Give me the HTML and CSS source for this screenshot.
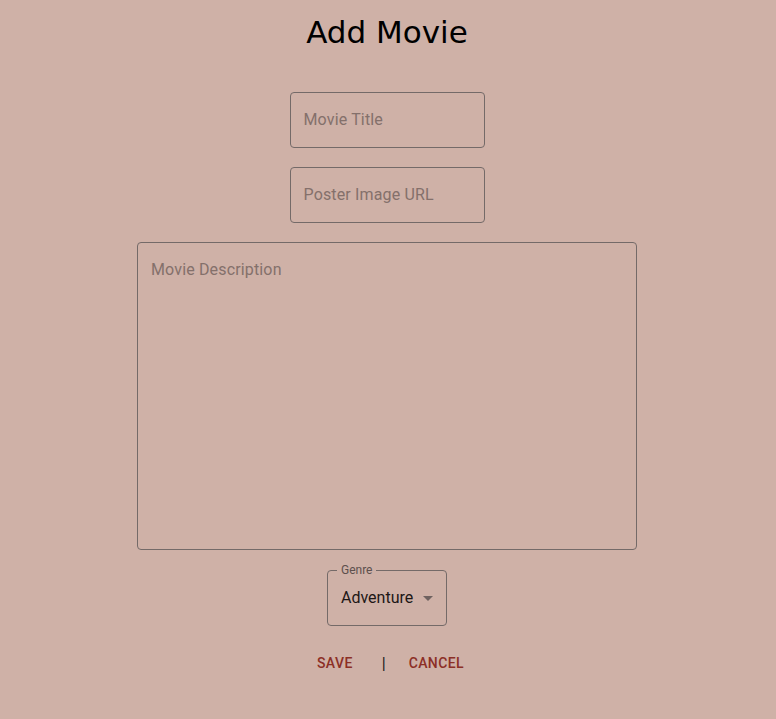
FILE: index.html
```html
<!DOCTYPE html>
<html>
<head>
<meta charset="utf-8">
<link rel="stylesheet" href="styles.css">
</head>
<body>
<div class="page">
  <h1 class="title">Add Movie</h1>
  <form class="form">
    <div class="field small"><span class="placeholder">Movie Title</span></div>
    <div class="field small"><span class="placeholder">Poster Image URL</span></div>
    <div class="field area"><span class="placeholder">Movie Description</span></div>
    <div class="field select">
      <span class="legend">Genre</span>
      <span class="value">Adventure</span>
      <svg class="arrow" width="24" height="24" viewBox="0 0 24 24"><path d="M7 10l5 5 5-5z" fill="#6f6260"/></svg>
    </div>
    <div class="actions">
      <span class="btn">SAVE</span>
      <span class="sep">|</span>
      <span class="btn">CANCEL</span>
    </div>
  </form>
</div>
</body>
</html>
```
FILE: styles.css
```css
html, body {
  margin: 0;
  padding: 0;
  background: #cfb1a7;
}
.page {
  display: flex;
  flex-direction: column;
  align-items: center;
  padding-right: 2px;
  font-family: Roboto, "Noto Sans", sans-serif;
}
.title {
  margin: 12px 0 0;
  font-family: "DejaVu Sans", sans-serif;
  font-weight: normal;
  font-size: 31px;
  line-height: 40px;
  color: #000;
}
.form {
  display: flex;
  flex-direction: column;
  align-items: center;
  margin-top: 40px;
}
.field {
  box-sizing: border-box;
  border: 1px solid #746a68;
  border-radius: 4px;
  position: relative;
}
.small {
  width: 195px;
  height: 56px;
  padding: 0 13px 2px;
  display: flex;
  align-items: center;
  margin-bottom: 19px;
}
.placeholder {
  font-size: 16px;
  color: #84706b;
  letter-spacing: 0.15px;
}
.area {
  width: 500px;
  height: 308px;
  padding: 17px 13px;
  margin-bottom: 20px;
}
.select {
  width: 120px;
  height: 56px;
  display: flex;
  align-items: center;
  padding: 0 6px 2px 13px;
  justify-content: space-between;
}
.legend {
  position: absolute;
  top: -8px;
  left: 9px;
  padding: 0 4px;
  background: #cfb1a7;
  font-size: 12px;
  line-height: 14px;
  color: #5d504d;
}
.value {
  font-size: 16px;
  color: #1d1716;
}
.arrow {
  display: block;
  margin-top: 2px;
}
.actions {
  display: flex;
  align-items: center;
  margin-top: 23px;
  margin-left: 7px;
}
.btn {
  font-size: 14px;
  font-weight: 500;
  letter-spacing: 0.4px;
  color: #8c2f26;
  padding: 6px 8px;
}
.sep {
  font-size: 16px;
  color: #1a1a1a;
  margin: 0 15px 0 21px;
}
```
